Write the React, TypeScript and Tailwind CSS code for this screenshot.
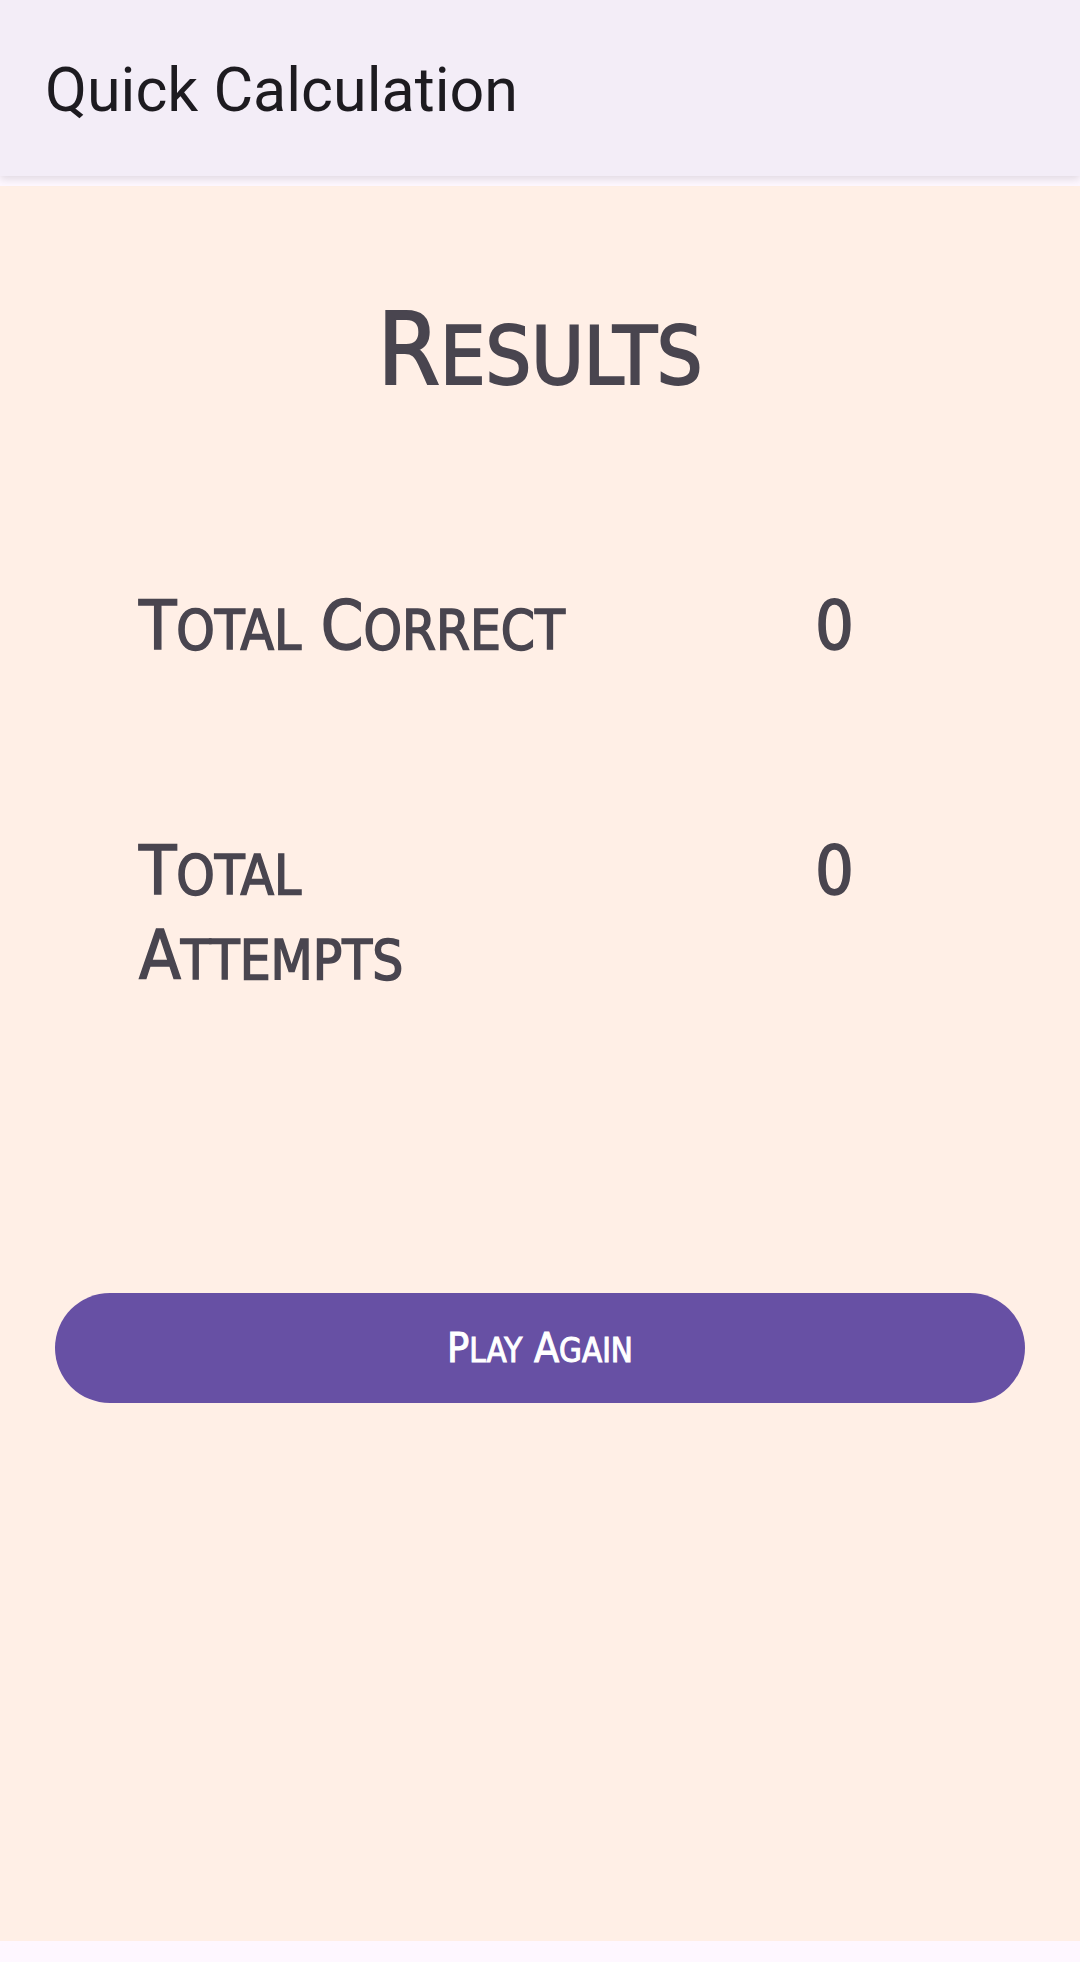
import React from 'react';

const SmallCaps = ({ text }: { text: string }) => (
  <>
    {text.split(' ').map((word, i) => (
      <React.Fragment key={i}>
        {i > 0 ? ' ' : ''}
        <span>
          {word.charAt(0).toUpperCase()}
          <span className="text-[0.8em] uppercase">{word.slice(1)}</span>
        </span>
      </React.Fragment>
    ))}
  </>
);

const StatRow = ({ label, value }: { label: string; value: number }) => (
  <div className="flex items-start pl-[139px] text-[68px] leading-[80px] text-[#49454f] [-webkit-text-stroke:1.5px_#49454f]">
    <div className="w-[440px] mr-[236px]">
      <SmallCaps text={label} />
    </div>
    <div>{value}</div>
  </div>
);

export default function App() {
  return (
    <div className="w-[1080px] h-[1962px] bg-[#fef7ff] flex flex-col overflow-hidden">
      <header className="relative z-10 h-[176px] shrink-0 bg-[#f3edf7] flex items-center px-[45px] pt-[4px] shadow-[0_3px_8px_rgba(0,0,0,0.12)]">
        <h1 className="text-[61px] text-[#1d1b20] font-['Roboto',sans-serif] leading-none">
          Quick Calculation
        </h1>
      </header>

      <main className="mt-[10px] h-[1755px] bg-[#ffefe6] font-['Liberation_Sans_Narrow','DejaVu_Sans_Condensed',sans-serif] pt-[114px] flex flex-col">
        <h2 className="text-center text-[100px] leading-none text-[#49454f] [-webkit-text-stroke:2px_#49454f]">
          <SmallCaps text="Results" />
        </h2>

        <div className="mt-[186px] flex flex-col gap-[160px]">
          <StatRow label="Total Correct" value={0} />
          <StatRow label="Total Attempts" value={0} />
        </div>

        <div className="mt-[292px] px-[55px]">
          <button className="w-full h-[110px] rounded-full bg-[#6750a4] text-white text-[41px] leading-none [-webkit-text-stroke:1px_#ffffff]">
            <SmallCaps text="Play Again" />
          </button>
        </div>
      </main>
    </div>
  );
}
